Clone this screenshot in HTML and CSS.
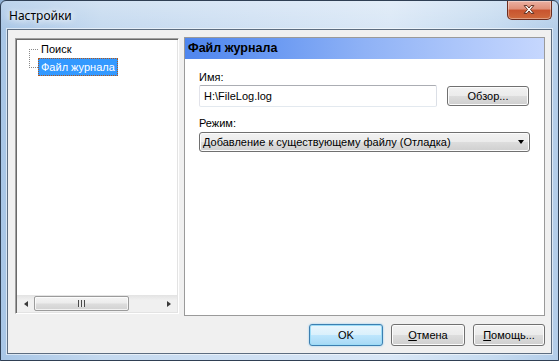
FILE: index.html
```html
<!DOCTYPE html>
<html lang="ru">
<head>
<meta charset="utf-8">
<title>Настройки</title>
<link rel="stylesheet" href="styles.css">
</head>
<body>
<div class="window">
  <div class="titlebar">
    <span class="title">Настройки</span>
    <div class="close">
      <svg width="45" height="19" viewBox="0 0 45 19">
        <path d="M17.5 5.5 L20.5 5.5 L22.5 8 L24.5 5.5 L27.5 5.5 L24 9.5 L27.5 13.5 L24.5 13.5 L22.5 11 L20.5 13.5 L17.5 13.5 L21 9.5 Z" fill="#ffffff" stroke="#5a2a1c" stroke-width="1"/>
      </svg>
    </div>
  </div>
  <div class="client">
    <div class="main">
      <div class="tree">
        <div class="tree-body">
          <svg class="tree-lines" width="9" height="36" viewBox="0 0 9 36">
            <path d="M0.5 9 V28 M0 9.5 H9 M0 27.5 H9" stroke="#8a8a8a" stroke-width="1" stroke-dasharray="1 1" fill="none"/>
          </svg>
          <div class="tree-items">
            <div class="tree-item">Поиск</div>
            <div class="tree-item selected">Файл журнала</div>
          </div>
        </div>
        <div class="hscroll">
          <span class="sarrow left"></span>
          <div class="strack">
            <div class="sthumb"><span class="grip"></span></div>
          </div>
          <span class="sarrow right"></span>
        </div>
      </div>
      <div class="panel">
        <div class="panel-head">Файл журнала</div>
        <div class="panel-body">
          <div class="label">Имя:</div>
          <div class="file-row">
            <div class="textbox">H:\FileLog.log</div>
            <div class="btn browse">Обзор...</div>
          </div>
          <div class="label mode">Режим:</div>
          <div class="combo">
            <span class="combo-text">Добавление к существующему файлу (Отладка)</span>
            <span class="combo-arrow"></span>
          </div>
        </div>
      </div>
    </div>
    <div class="buttons">
      <div class="btn default">OK</div>
      <div class="btn"><u>О</u>тмена</div>
      <div class="btn help"><u>П</u>омощь...</div>
    </div>
  </div>
</div>
</body>
</html>
```
FILE: styles.css
```css
* { box-sizing: border-box; }
html, body { margin: 0; padding: 0; }
body {
  width: 559px;
  height: 361px;
  overflow: hidden;
  background: #8fb0d4;
  font-family: "Liberation Sans", Arial, sans-serif;
  font-size: 11px;
  color: #000;
}
.window {
  width: 559px;
  height: 361px;
  border: 1px solid #2f3f54;
  border-radius: 6px 6px 0 0;
  padding: 0 6px 6px 6px;
  display: flex;
  flex-direction: column;
  background:
    linear-gradient(180deg, rgba(255,255,255,0.25) 0, rgba(255,255,255,0) 30px),
    linear-gradient(90deg, #a8c6e6 0, #c4d9ef 18%, #cfe0f3 45%, #d9e7f6 70%, #c6dbf0 88%, #b3cde9 100%);
}
.titlebar {
  height: 28px;
  display: flex;
  align-items: flex-start;
  justify-content: space-between;
}
.title {
  font-family: "Noto Sans", "Open Sans", sans-serif;
  font-size: 12px;
  line-height: 16px;
  margin-top: 7px;
  padding-left: 2px;
  color: #000;
  text-shadow: 0 0 6px #ffffff, 0 0 10px #ffffff;
}
.close {
  width: 45px;
  height: 19px;
  margin-right: 0;
  border: 1px solid #6c2d1f;
  border-top: none;
  border-radius: 0 0 5px 5px;
  background: linear-gradient(180deg, #eab0a2 0, #df8f78 45%, #c8532f 50%, #cf6a3c 100%);
  box-shadow: inset 0 0 0 1px rgba(255,255,255,0.35);
  display: flex;
}
.close svg { display: block; margin: -1px 0 0 -1px; }
.client {
  width: 545px;
  height: 325px;
  border: 1px solid #5d6d80;
  box-shadow: 0 0 0 1px rgba(255,255,255,0.55);
  background: #f0f0f0;
  padding: 7px 6px 7px 7px;
  display: flex;
  flex-direction: column;
}
.main {
  display: flex;
  align-items: flex-start;
  gap: 5px;
}
.tree {
  width: 164px;
  height: 276px;
  margin-top: 1px;
  border-style: solid;
  border-width: 1px;
  border-color: #a0a0a0 #ffffff #ffffff #a0a0a0;
  box-shadow: inset 1px 1px 0 #696969, inset -1px -1px 0 #e3e3e3;
  background: #fff;
  padding: 1px;
  display: flex;
  flex-direction: column;
}
.tree-body {
  flex: 1;
  display: flex;
  align-items: flex-start;
}
.tree-lines {
  display: block;
  margin-left: 12px;
  flex: none;
}
.tree-items {
  display: flex;
  flex-direction: column;
}
.tree-item {
  height: 18px;
  line-height: 16px;
  padding: 0 2px 0 2px;
  border: 1px solid transparent;
  white-space: nowrap;
  align-self: flex-start;
}
.tree-item.selected {
  background: #3399ff;
  color: #fff;
  border: 1px dotted #b0561c;
}
.hscroll {
  height: 17px;
  display: flex;
  align-items: center;
  background: linear-gradient(180deg, #e3e3e3 0, #f0f0f0 30%, #f0f0f0 100%);
}
.sarrow {
  width: 17px;
  height: 17px;
  display: flex;
  align-items: center;
  justify-content: center;
  flex: none;
}
.sarrow::before {
  content: "";
  width: 0;
  height: 0;
  border-top: 3.5px solid transparent;
  border-bottom: 3.5px solid transparent;
}
.sarrow.left::before { border-right: 4px solid #3a3a3a; }
.sarrow.right::before { border-left: 4px solid #3a3a3a; }
.strack {
  flex: 1;
  height: 17px;
  display: flex;
  align-items: center;
}
.sthumb {
  width: 95px;
  height: 15px;
  margin-left: 0;
  border: 1px solid #9b9b9b;
  border-radius: 2px;
  background: linear-gradient(180deg, #f4f4f4 0, #ececec 45%, #dcdcdc 55%, #d2d2d2 100%);
  box-shadow: inset 0 0 0 1px rgba(255,255,255,0.7);
  display: flex;
  align-items: center;
  justify-content: center;
}
.grip {
  width: 7px;
  height: 7px;
  background: repeating-linear-gradient(90deg, #4a4a4a 0, #4a4a4a 1px, #e8e8e8 1px, #e8e8e8 3px);
}
.panel {
  width: 361px;
  height: 279px;
  border: 1px solid #9a9a9a;
  background: #fff;
  display: flex;
  flex-direction: column;
}
.panel-head {
  height: 21px;
  line-height: 21px;
  padding-left: 3px;
  font-weight: bold;
  font-size: 12.5px;
  background: linear-gradient(90deg, #4f86ee 0, #6b9af2 25%, #8fb2f6 50%, #abc5fa 75%, #c6d7fe 100%);
}
.panel-body {
  padding: 12px 0 0 14px;
  display: flex;
  flex-direction: column;
  align-items: flex-start;
}
.label {
  height: 13px;
  line-height: 13px;
}
.label.mode { margin-top: 10px; }
.file-row {
  margin-top: 1px;
  display: flex;
  align-items: center;
  gap: 10px;
}
.textbox {
  width: 238px;
  height: 22px;
  line-height: 20px;
  padding-left: 4px;
  border: 1px solid #abadb3;
  border-top-color: #abadb3;
  border-left-color: #e2e3ea;
  border-right-color: #dbdfe6;
  border-bottom-color: #e3e9ef;
  border-radius: 2px;
  background: #fff;
}
.btn {
  width: 74px;
  height: 22px;
  line-height: 20px;
  text-align: center;
  border: 1px solid #707070;
  border-radius: 3px;
  background: linear-gradient(180deg, #f2f2f2 0, #ebebeb 50%, #dddddd 50%, #cfcfcf 100%);
  box-shadow: inset 0 0 0 1px #fcfcfc;
  white-space: nowrap;
}
.btn u { text-decoration: underline; }
.btn.browse {
  width: 82px;
  height: 20px;
  line-height: 18px;
}
.combo {
  margin-top: 2px;
  width: 331px;
  height: 20px;
  border: 1px solid #707070;
  border-radius: 3px;
  background: linear-gradient(180deg, #f2f2f2 0, #ebebeb 50%, #dddddd 50%, #cfcfcf 100%);
  box-shadow: inset 0 0 0 1px #fcfcfc;
  display: flex;
  align-items: center;
  justify-content: space-between;
  padding: 0 5px 0 3px;
}
.combo-text { line-height: 18px; white-space: nowrap; }
.combo-arrow {
  width: 0;
  height: 0;
  border-left: 3.5px solid transparent;
  border-right: 3.5px solid transparent;
  border-top: 4px solid #000;
}
.buttons {
  margin-top: 8px;
  display: flex;
  justify-content: flex-end;
  gap: 8px;
  padding-right: 0;
}
.btn.default {
  border-color: #3c7fb1;
  background: linear-gradient(180deg, #eaf6fd 0, #d9f0fc 50%, #bee6fd 50%, #a7d9f5 100%);
  box-shadow: inset 0 0 0 1px #9ddcf7, 0 0 2px #7fc4ef;
}
.btn.help { width: 72px; }
```
